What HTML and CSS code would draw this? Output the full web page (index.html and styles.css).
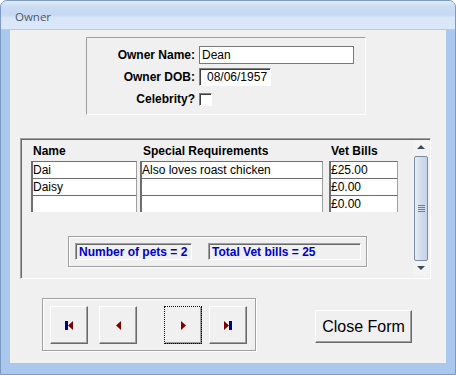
FILE: index.html
```html
<!DOCTYPE html>
<html lang="en">
<head>
    <meta charset="UTF-8">
    <title>Owner</title>
    <link rel="stylesheet" href="styles.css">
</head>
<body>
    <div class="window">
        <div class="titlebar"><span class="title">Owner</span></div>
        <div class="client">
            <!-- Owner details -->
            <div class="owner-box">
                <div class="field-grid">
                    <label>Owner Name:</label>
                    <div class="textbox name-box">Dean</div>
                    <label>Owner DOB:</label>
                    <div class="textbox dob-box">08/06/1957</div>
                    <label>Celebrity?</label>
                    <div><span class="checkbox"></span></div>
                </div>
            </div>

            <!-- Pets subform -->
            <div class="grid-frame">
                <div class="grid-area">
                    <div class="pets-table">
                        <div class="th th-name">Name</div>
                        <div class="th th-req">Special Requirements</div>
                        <div class="th th-vet">Vet Bills</div>

                        <div class="cell c-name">Dai</div>
                        <div class="cell c-req">Also loves roast chicken</div>
                        <div class="cell c-vet">£25.00</div>

                        <div class="cell c-name">Daisy</div>
                        <div class="cell c-req"></div>
                        <div class="cell c-vet">£0.00</div>

                        <div class="cell c-name"></div>
                        <div class="cell c-req"></div>
                        <div class="cell c-vet last">£0.00</div>
                    </div>
                    <div class="summary">
                        <div class="calc pets-count">Number of pets = 2</div>
                        <div class="calc vet-total">Total Vet bills = 25</div>
                    </div>
                </div>
                <div class="scrollbar">
                    <div class="arrow up"></div>
                    <div class="thumb"><span class="grip"></span></div>
                    <div class="arrow down"></div>
                </div>
            </div>

            <!-- Navigation + close -->
            <div class="bottom-row">
                <div class="nav-box">
                    <button class="nav-btn first-btn">
                        <svg width="9" height="9" viewBox="0 0 9 9"><rect x="0" y="0" width="3" height="9" fill="#000080"/><polygon points="8,0 3,4.5 8,9" fill="#800000"/></svg>
                    </button>
                    <button class="nav-btn prev-btn">
                        <svg width="5" height="9" viewBox="0 0 5 9"><polygon points="5,0 0,4.5 5,9" fill="#800000"/></svg>
                    </button>
                    <button class="nav-btn next-btn focused">
                        <svg width="5" height="9" viewBox="0 0 5 9"><polygon points="0,0 5,4.5 0,9" fill="#800000"/></svg>
                    </button>
                    <button class="nav-btn last-btn">
                        <svg width="9" height="9" viewBox="0 0 9 9"><polygon points="0,0 5,4.5 0,9" fill="#800000"/><rect x="5" y="0" width="3" height="9" fill="#000080"/></svg>
                    </button>
                </div>
                <button class="close-btn">Close Form</button>
            </div>
        </div>
    </div>
</body>
</html>
```

FILE: styles.css
```css
body {
    margin: 0;
    font-family: "Liberation Sans", Arial, sans-serif;
    font-size: 12px;
    color: #000;
    background-color: #ffffff;
}
.window {
    width: 456px;
    height: 375px;
    box-sizing: border-box;
    border: 1px solid #7d9ac2;
    border-radius: 7px 7px 0 0;
    background-color: #aac7ee;
    padding: 0 9px 10px 9px;
    overflow: hidden;
}
.titlebar {
    height: 29px;
    margin: 0 -9px;
    box-sizing: border-box;
    padding: 3px 0 0 14px;
    border-bottom: 1px solid #b5cced;
    background: linear-gradient(#e2ecf9 0%, #cadcf3 20%, #c7d9f2 50%, #d8e6f8 60%, #dae8f9 100%);
}
.title {
    font-family: "Open Sans", "Noto Sans", sans-serif;
    font-size: 11.5px;
    line-height: 26px;
    color: #4b5768;
}
.client {
    height: 333px;
    background-color: #f0f0f0;
    padding-top: 7px;
    box-sizing: border-box;
}

/* owner details */
.owner-box {
    width: 280px;
    height: 78px;
    margin-left: 76px;
    box-sizing: border-box;
    border: 1px solid;
    border-color: #a0a0a0 #ffffff #ffffff #a0a0a0;
    padding-top: 8px;
}
.field-grid {
    display: grid;
    grid-template-columns: 108px auto;
    grid-auto-rows: 18px;
    column-gap: 4px;
    row-gap: 4px;
}
.field-grid label {
    text-align: right;
    font-weight: bold;
    line-height: 18px;
}
.textbox {
    height: 18px;
    box-sizing: border-box;
    background-color: #fff;
    line-height: 16px;
}
.name-box {
    width: 155px;
    border: 1px solid #7a7a7a;
    padding-left: 2px;
}
.dob-box {
    width: 72px;
    border: 1px solid;
    border-color: #808080 #ffffff #ffffff #808080;
    box-shadow: inset 1px 1px 0 #404040;
    padding-left: 7px;
    line-height: 17px;
}
.checkbox {
    display: block;
    width: 13px;
    height: 13px;
    margin-top: 3px;
    box-sizing: border-box;
    background-color: #fff;
    border: 1px solid;
    border-color: #808080 #ffffff #ffffff #808080;
    box-shadow: inset 1px 1px 0 #404040;
}

/* pets subform */
.grid-frame {
    display: flex;
    width: 411px;
    height: 141px;
    margin: 23px 0 0 10px;
    box-sizing: border-box;
    border: 1px solid;
    border-color: #a0a0a0 #ffffff #ffffff #a0a0a0;
    box-shadow: inset 1px 1px 0 #696969;
}
.grid-area {
    flex: 1;
    padding: 5px 0 0 10px;
}
.pets-table {
    display: grid;
    grid-template-columns: 109px 189px 69px;
}
.th {
    font-weight: bold;
    height: 14px;
    line-height: 14px;
    margin-bottom: 3px;
    padding-left: 2px;
}
.th-req {
    padding-left: 3px;
}
.cell {
    height: 17px;
    box-sizing: border-box;
    background-color: #fff;
    border-top: 1px solid #6e6e6e;
    border-left: 2px solid #6e6e6e;
    border-right: 1px solid #a0a0a0;
    line-height: 16px;
    white-space: nowrap;
    overflow: hidden;
}
.c-name {
    width: 106px;
}
.c-req {
    width: 183px;
}
.c-vet {
    width: 69px;
}
.summary {
    display: flex;
    width: 299px;
    height: 31px;
    margin: 24px 0 0 37px;
    box-sizing: border-box;
    border: 1px solid #a0a0a0;
    box-shadow: inset 1px 1px 0 #fff, 1px 1px 0 #fff;
    padding: 6px 0 0 6px;
}
.calc {
    height: 17px;
    box-sizing: border-box;
    border: 1px solid;
    border-color: #a0a0a0 #ffffff #ffffff #a0a0a0;
    box-shadow: inset 1px 1px 0 #696969;
    padding-left: 3px;
    color: #0000c8;
    font-weight: bold;
    line-height: 16px;
    white-space: nowrap;
}
.pets-count {
    width: 117px;
}
.vet-total {
    width: 153px;
    margin-left: 16px;
}
.scrollbar {
    width: 16px;
    margin: 1px 1px 2px 0;
    display: flex;
    flex-direction: column;
    align-items: center;
    background-color: #f3f3f3;
}
.arrow {
    width: 0;
    height: 0;
    border-left: 4px solid transparent;
    border-right: 4px solid transparent;
}
.arrow.up {
    margin-top: 5px;
    border-bottom: 4px solid #3c4a5e;
}
.arrow.down {
    margin-top: 5px;
    border-top: 4px solid #3c4a5e;
}
.thumb {
    width: 14px;
    height: 105px;
    margin-top: 7px;
    box-sizing: border-box;
    border: 1px solid #7a8aa3;
    border-radius: 2px;
    background: linear-gradient(90deg, #e6edf6, #d2ddec 50%, #c6d3e6);
    display: flex;
    align-items: center;
    justify-content: center;
}
.grip {
    width: 7px;
    height: 7px;
    background: repeating-linear-gradient(#6f7f98 0, #6f7f98 1px, transparent 1px, transparent 2px);
}

/* navigation */
.bottom-row {
    display: flex;
    margin: 19px 0 0 32px;
}
.nav-box {
    display: flex;
    width: 214px;
    height: 53px;
    box-sizing: border-box;
    border: 1px solid #a0a0a0;
    box-shadow: inset 1px 1px 0 #fff, 1px 1px 0 #fff;
    padding: 7px 0 0 7px;
}
.nav-btn {
    width: 38px;
    height: 38px;
    padding: 0;
    display: flex;
    align-items: center;
    justify-content: center;
    background-color: #f0f0f0;
    border: 1px solid;
    border-color: #ffffff #696969 #696969 #ffffff;
    box-shadow: inset -1px -1px 0 #a0a0a0;
}
.prev-btn {
    margin-left: 11px;
}
.next-btn {
    margin-left: 27px;
}
.last-btn {
    margin-left: 7px;
}
.nav-btn.focused {
    outline: 1px dotted #000;
    outline-offset: -1px;
}
.close-btn {
    width: 97px;
    height: 33px;
    margin: 12px 0 0 59px;
    padding: 0;
    font-family: "Liberation Sans", Arial, sans-serif;
    font-size: 16px;
    color: #000;
    background-color: #f0f0f0;
    border: 1px solid;
    border-color: #ffffff #696969 #696969 #ffffff;
    box-shadow: inset -1px -1px 0 #a0a0a0;
}
```
